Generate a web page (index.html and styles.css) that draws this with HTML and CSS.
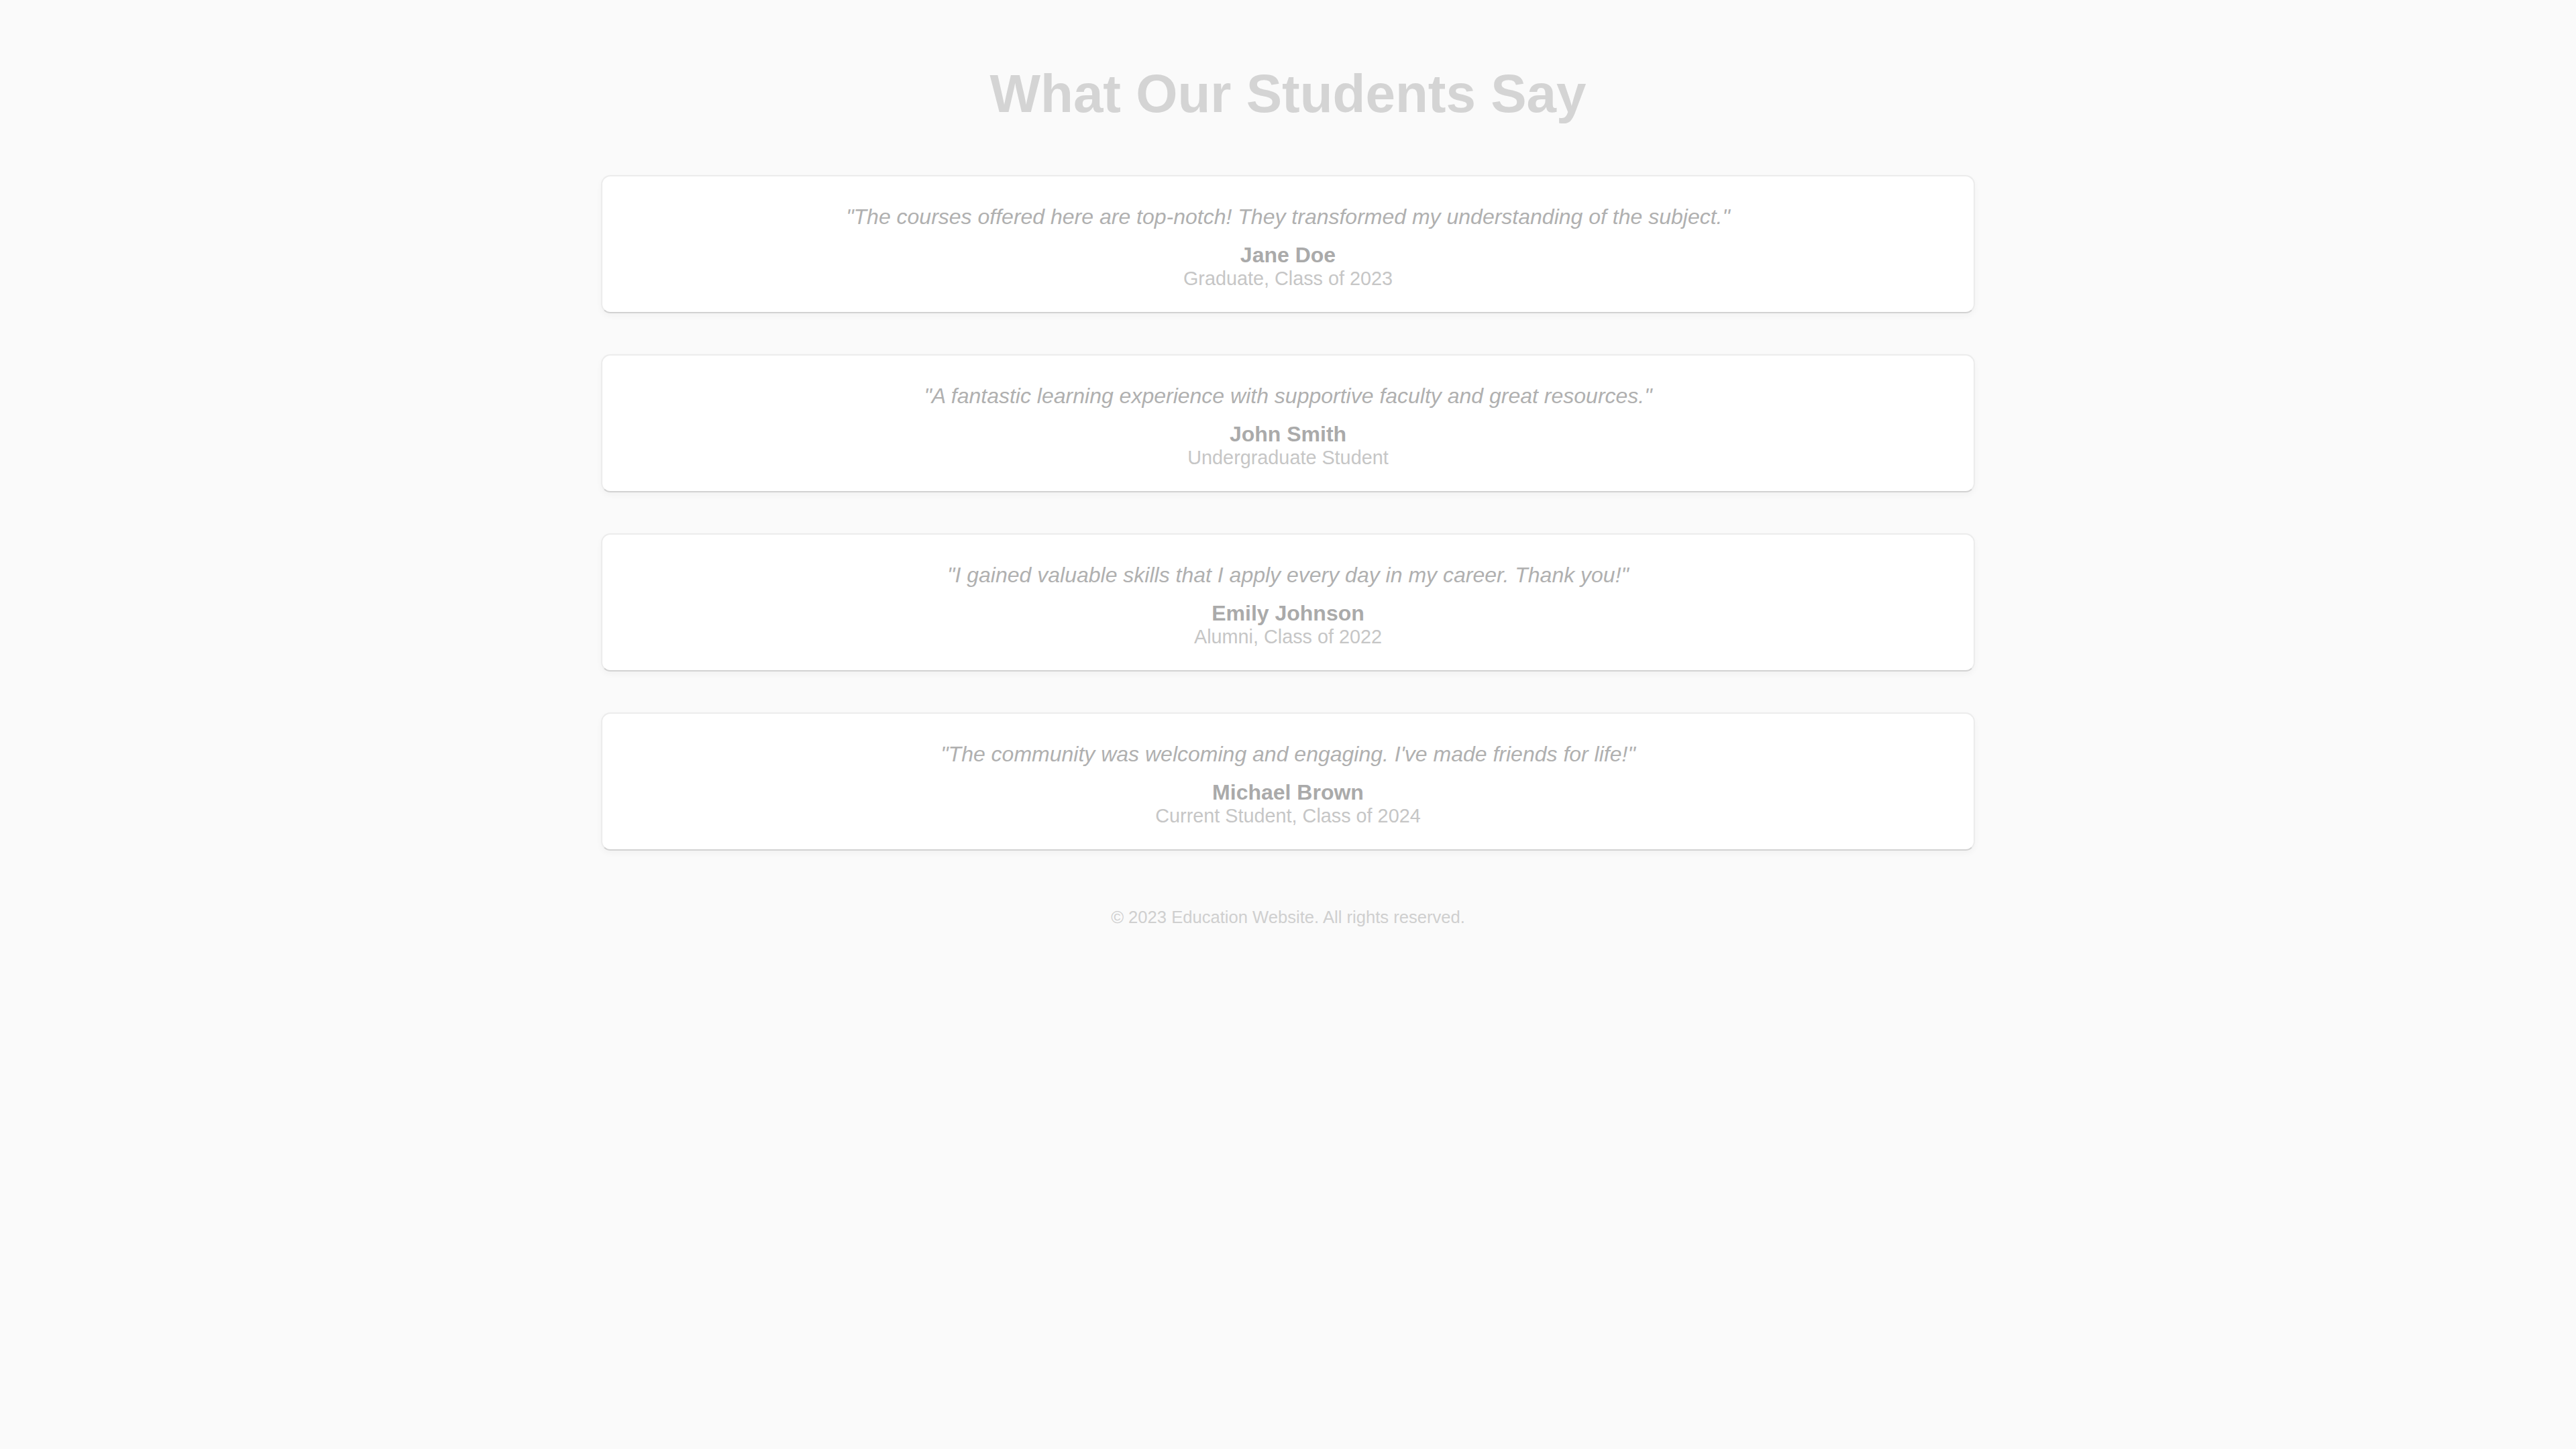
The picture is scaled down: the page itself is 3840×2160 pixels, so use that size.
FILE: index.html
```html
<!DOCTYPE html>
<html lang="en">
<head>
<meta charset="utf-8">
<title>What Our Students Say</title>
<link rel="stylesheet" href="styles.css">
</head>
<body>
<main class="page">
  <h1 class="title">What Our Students Say</h1>
  <section class="list">
    <article class="card">
      <p class="quote">"The courses offered here are top-notch! They transformed my understanding of the subject."</p>
      <h3 class="name">Jane Doe</h3>
      <p class="role">Graduate, Class of 2023</p>
    </article>
    <article class="card">
      <p class="quote">"A fantastic learning experience with supportive faculty and great resources."</p>
      <h3 class="name">John Smith</h3>
      <p class="role">Undergraduate Student</p>
    </article>
    <article class="card">
      <p class="quote">"I gained valuable skills that I apply every day in my career. Thank you!"</p>
      <h3 class="name">Emily Johnson</h3>
      <p class="role">Alumni, Class of 2022</p>
    </article>
    <article class="card">
      <p class="quote">"The community was welcoming and engaging. I've made friends for life!"</p>
      <h3 class="name">Michael Brown</h3>
      <p class="role">Current Student, Class of 2024</p>
    </article>
  </section>
  <footer class="footer">© 2023 Education Website. All rights reserved.</footer>
</main>
</body>
</html>
```
FILE: styles.css
```css
html, body {
  margin: 0;
  padding: 0;
  background: #fafafa;
}
body {
  font-family: "Liberation Sans", Arial, sans-serif;
}
.page {
  width: 2048px;
  margin: 0 auto;
  padding-top: 95px;
  display: flex;
  flex-direction: column;
}
.title {
  margin: 0 0 77px;
  font-size: 80px;
  line-height: 89px;
  font-weight: 700;
  color: #d4d4d4;
  text-align: center;
}
.list {
  display: flex;
  flex-direction: column;
  gap: 61px;
}
.card {
  box-sizing: border-box;
  height: 206px;
  background: #ffffff;
  border: 2px solid #ececec;
  border-bottom-color: #d2d2d2;
  border-radius: 14px;
  box-shadow: 0 4px 10px rgba(0, 0, 0, 0.035);
  padding: 42px 40px 0;
  text-align: center;
}
.quote {
  margin: 0 0 20px;
  font-size: 32px;
  line-height: 37px;
  font-style: italic;
  color: #b0b0b0;
}
.name {
  margin: 0;
  font-size: 32px;
  line-height: 37px;
  font-weight: 700;
  color: #aaaaaa;
}
.role {
  margin: 0;
  font-size: 28.8px;
  line-height: 33px;
  color: #c6c6c6;
}
.footer {
  margin-top: 84px;
  font-size: 25.6px;
  line-height: 30px;
  color: #cfcfcf;
  text-align: center;
}
```
